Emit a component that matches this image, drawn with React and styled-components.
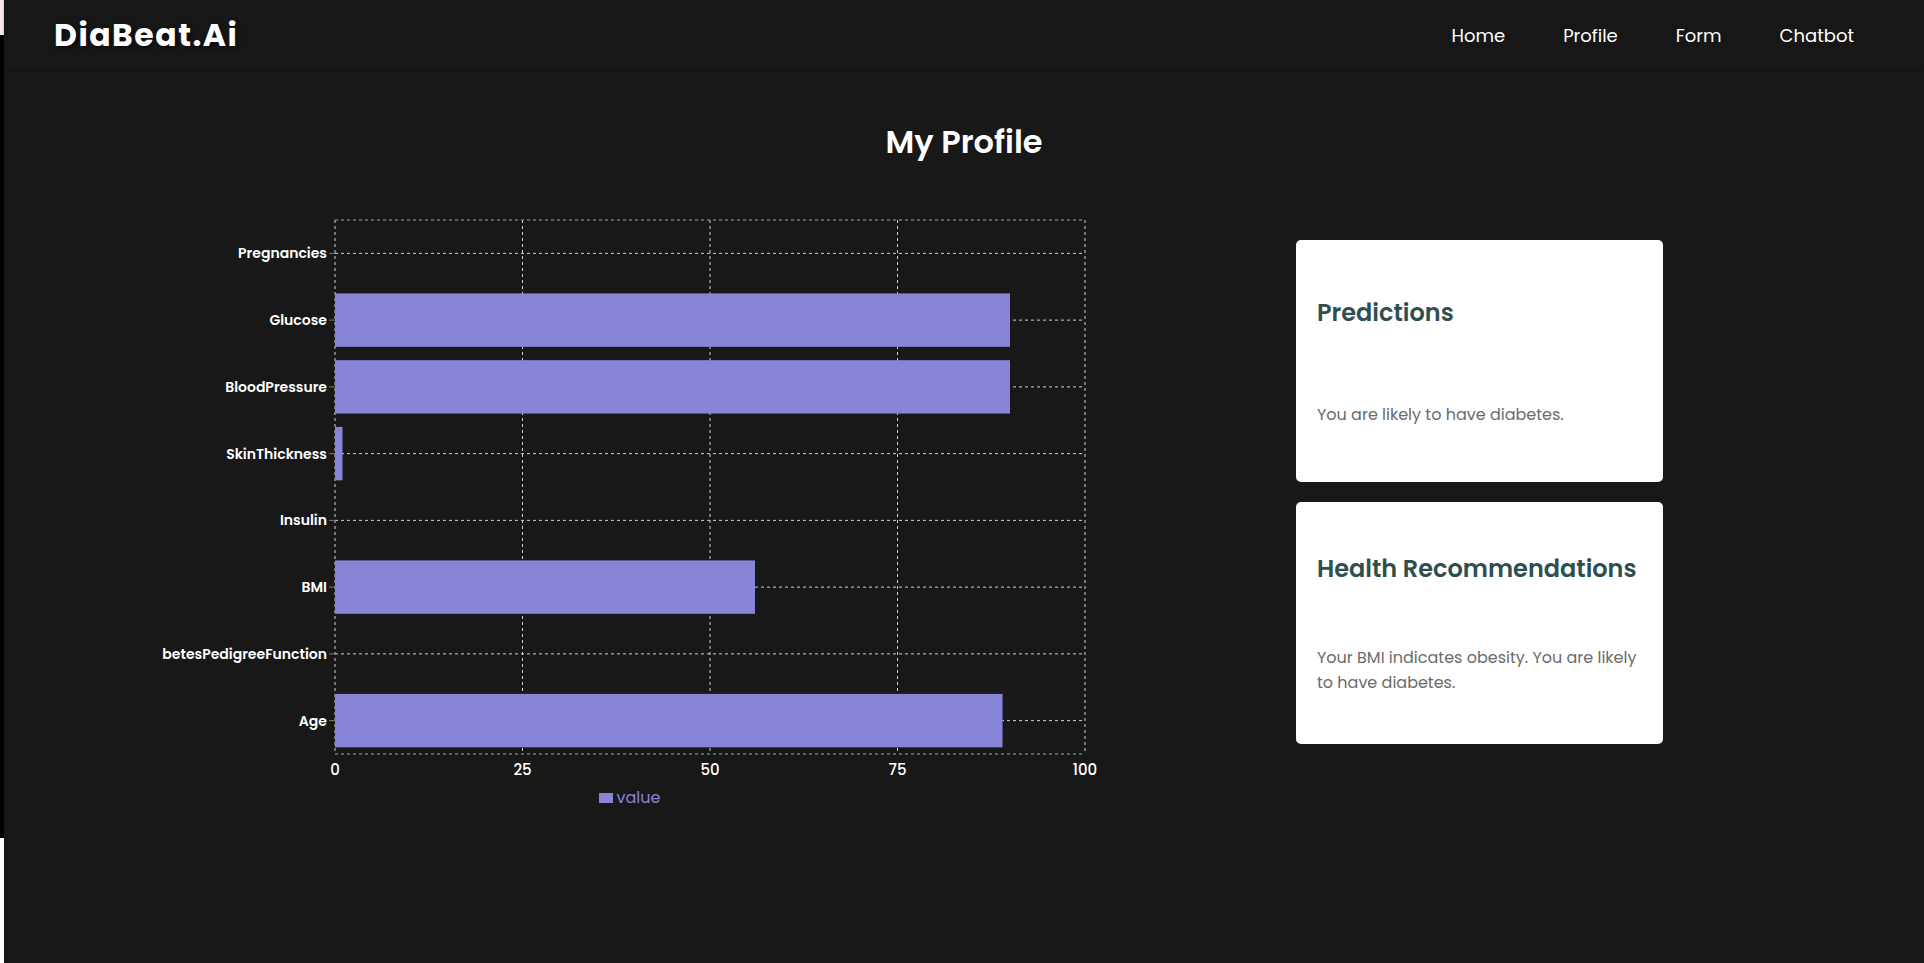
import React from 'react';
import styled, { createGlobalStyle } from 'styled-components';

const GlobalStyle = createGlobalStyle`
  html, body {
    margin: 0;
    padding: 0;
  }
  body {
    font-family: Poppins, Inter, "Noto Sans", sans-serif;
    background:
      linear-gradient(to bottom, #fde6ea 0, #fde6ea 35px, #000 35px, #000 838px, #fff 838px) left top / 4px 100% no-repeat,
      #181818;
  }
`;

const data = [
  { name: 'Pregnancies', value: 0 },
  { name: 'Glucose', value: 90 },
  { name: 'BloodPressure', value: 90 },
  { name: 'SkinThickness', value: 1 },
  { name: 'Insulin', value: 0 },
  { name: 'BMI', value: 56 },
  { name: 'DiabetesPedigreeFunction', value: 0 },
  { name: 'Age', value: 89 },
];

const ticks = [0, 25, 50, 75, 100];

// chart geometry, in svg units
const W = 953;
const H = 566;
const L = 173;
const R = 923;
const T = 5;
const B = 539;
const band = (B - T) / data.length;

const BarChart = () => (
  <ChartSvg width={W} height={H} viewBox={`0 0 ${W} ${H}`}>
    {ticks.map((t) => {
      const x = L + ((R - L) * t) / 100;
      return <GridLine key={`v${t}`} x1={x} x2={x} y1={T} y2={B} />;
    })}
    {data.map((d, i) => {
      const y = T + band * i + band / 2;
      return <GridLine key={`h${d.name}`} x1={L} x2={R} y1={y} y2={y} />;
    })}
    <Frame x1={L} x2={R} y1={T} y2={T} />
    <Frame x1={R} x2={R} y1={T} y2={B} />
    <Frame x1={L} x2={L} y1={T} y2={B} />
    <Frame x1={L} x2={R} y1={B} y2={B} />

    {data.map((d, i) => {
      const y = T + band * i + band * 0.1;
      const w = ((R - L) * d.value) / 100;
      return w > 0 ? (
        <Bar key={`b${d.name}`} x={L} y={y} width={w} height={band * 0.8} />
      ) : null;
    })}

    {data.map((d, i) => {
      const y = T + band * i + band / 2;
      return (
        <g key={`l${d.name}`}>
          <Tick x1={L - 6} x2={L} y1={y} y2={y} />
          <YLabel x={L - 8} y={y} textAnchor="end" dominantBaseline="central">
            {d.name}
          </YLabel>
        </g>
      );
    })}

    {ticks.map((t) => {
      const x = L + ((R - L) * t) / 100;
      return (
        <XLabel key={`x${t}`} x={x} y={B + 15} textAnchor="middle" dominantBaseline="central">
          {t}
        </XLabel>
      );
    })}
  </ChartSvg>
);

export default function App() {
  return (
    <Page>
      <GlobalStyle />
      <Navbar>
        <Logo>DiaBeat.Ai</Logo>
        <NavLinks>
          <NavLink>Home</NavLink>
          <NavLink>Profile</NavLink>
          <NavLink>Form</NavLink>
          <NavLink>Chatbot</NavLink>
        </NavLinks>
      </Navbar>
      <Main>
        <Title>My Profile</Title>
        <Row>
          <ChartColumn>
            <BarChart />
            <Legend>
              <LegendSwatch />
              value
            </Legend>
          </ChartColumn>
          <Cards>
            <Card>
              <CardTitle>Predictions</CardTitle>
              <CardText>You are likely to have diabetes.</CardText>
            </Card>
            <Card>
              <CardTitle>Health Recommendations</CardTitle>
              <CardText>Your BMI indicates obesity. You are likely to have diabetes.</CardText>
            </Card>
          </Cards>
        </Row>
      </Main>
    </Page>
  );
}

const Page = styled.div`
  margin-left: 4px;
  min-height: 100vh;
  background: #181818;
  color: #fff;
`;

const Navbar = styled.nav`
  height: 70px;
  display: flex;
  align-items: center;
  justify-content: space-between;
  padding: 0 70px 0 50px;
  background: #171717;
  box-shadow: 0 1px 2px rgba(0, 0, 0, 0.35);
`;

const Logo = styled.div`
  font-size: 31.5px;
  font-weight: 700;
  letter-spacing: 1.5px;
  color: #fff;
  text-shadow: 2px 2px 4px rgba(0, 0, 0, 0.6);
`;

const NavLinks = styled.div`
  display: flex;
  gap: 58px;
`;

const NavLink = styled.a`
  font-size: 18px;
  color: #fff;
  cursor: pointer;
`;

const Main = styled.main`
  padding-top: 46px;
`;

const Title = styled.h1`
  margin: 0;
  text-align: center;
  font-size: 32px;
  font-weight: 600;
  line-height: 51px;
`;

const Row = styled.div`
  display: flex;
  align-items: flex-start;
  gap: 181px;
  padding-left: 158px;
  margin-top: 48px;
`;

const ChartColumn = styled.div`
  display: flex;
  flex-direction: column;
  width: 953px;
`;

const ChartSvg = styled.svg`
  display: block;
  overflow: hidden;
`;

const GridLine = styled.line`
  stroke: #cfcfcf;
  stroke-width: 1;
  stroke-dasharray: 3 3;
`;

const Frame = styled.line`
  stroke: #777;
  stroke-width: 1.5;
  stroke-dasharray: 3 3;
`;

const Tick = styled.line`
  stroke: #777;
  stroke-width: 1;
`;

const Bar = styled.rect`
  fill: #8884d8;
`;

const YLabel = styled.text`
  fill: #fff;
  font-size: 14px;
  font-weight: 600;
`;

const XLabel = styled.text`
  fill: #fff;
  font-size: 15px;
  font-weight: 500;
`;

const Legend = styled.div`
  display: flex;
  align-items: center;
  justify-content: center;
  gap: 4px;
  margin-top: 4px;
  padding-right: 18px;
  font-size: 16px;
  color: #8884d8;
`;

const LegendSwatch = styled.span`
  width: 14px;
  height: 10px;
  background: #8884d8;
`;

const Cards = styled.div`
  display: flex;
  flex-direction: column;
  gap: 20px;
  margin-top: 25px;
`;

const Card = styled.div`
  box-sizing: border-box;
  width: 367px;
  height: 242px;
  padding: 20px 21px;
  display: flex;
  flex-direction: column;
  justify-content: space-around;
  background: #fff;
  border-radius: 5px;
`;

const CardTitle = styled.h2`
  margin: 0;
  font-size: 24px;
  font-weight: 600;
  line-height: 36px;
  color: #2f4f4f;
`;

const CardText = styled.p`
  margin: 0;
  font-size: 16px;
  line-height: 25px;
  color: #6b6b6b;
`;
